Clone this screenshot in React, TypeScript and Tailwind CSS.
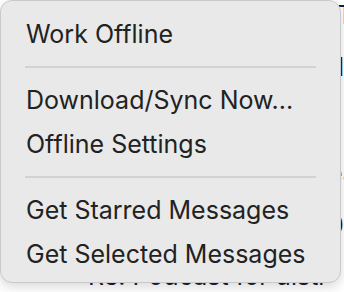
import React from "react";

const groups: string[][] = [
  ["Work Offline"],
  ["Download/Sync Now...", "Offline Settings"],
  ["Get Starred Messages", "Get Selected Messages"],
];

const MenuItem: React.FC<{ label: string }> = ({ label }) => (
  <div className="h-[44px] leading-[44px] px-[25px] text-[25px] text-[#222222] whitespace-nowrap">
    {label}
  </div>
);

const Separator: React.FC = () => (
  <div className="h-[22px] flex items-center px-[24px]">
    <div className="h-[2px] w-full bg-[#d2d2d2]" />
  </div>
);

export default function App() {
  return (
    <div
      className="relative w-[344px] h-[292px] overflow-hidden bg-white"
      style={{ fontFamily: "Inter, 'Noto Sans', sans-serif" }}
    >
      {/* window content behind the menu */}
      <div className="flex flex-col text-[25px] text-[#1b1b3d] leading-[30px]">
        <div className="h-[0px]" />
        <div className="pl-[337px]">T</div>
        <div className="h-[22px]" />
        <div className="pl-[338px]">l</div>
        <div className="h-[76px]" />
        <div className="pl-[328px]">ea</div>
        <div className="h-[22px]" />
        <div className="pl-[328px]">0)</div>
        <div className="h-[21px]" />
        <div className="pl-[88px] whitespace-nowrap">Re: Podcast for distr</div>
      </div>

      {/* dropdown menu */}
      <div className="absolute left-0 top-0 w-[341px] h-[283px] rounded-[12px] bg-[#e9e9e9] border border-[#c9c9c9] shadow-[0_4px_12px_rgba(0,0,0,0.15)] pt-[11px] pb-[7px]">
        {groups.map((items, gi) => (
          <React.Fragment key={gi}>
            {gi > 0 && <Separator />}
            {items.map((label) => (
              <MenuItem key={label} label={label} />
            ))}
          </React.Fragment>
        ))}
      </div>
    </div>
  );
}
